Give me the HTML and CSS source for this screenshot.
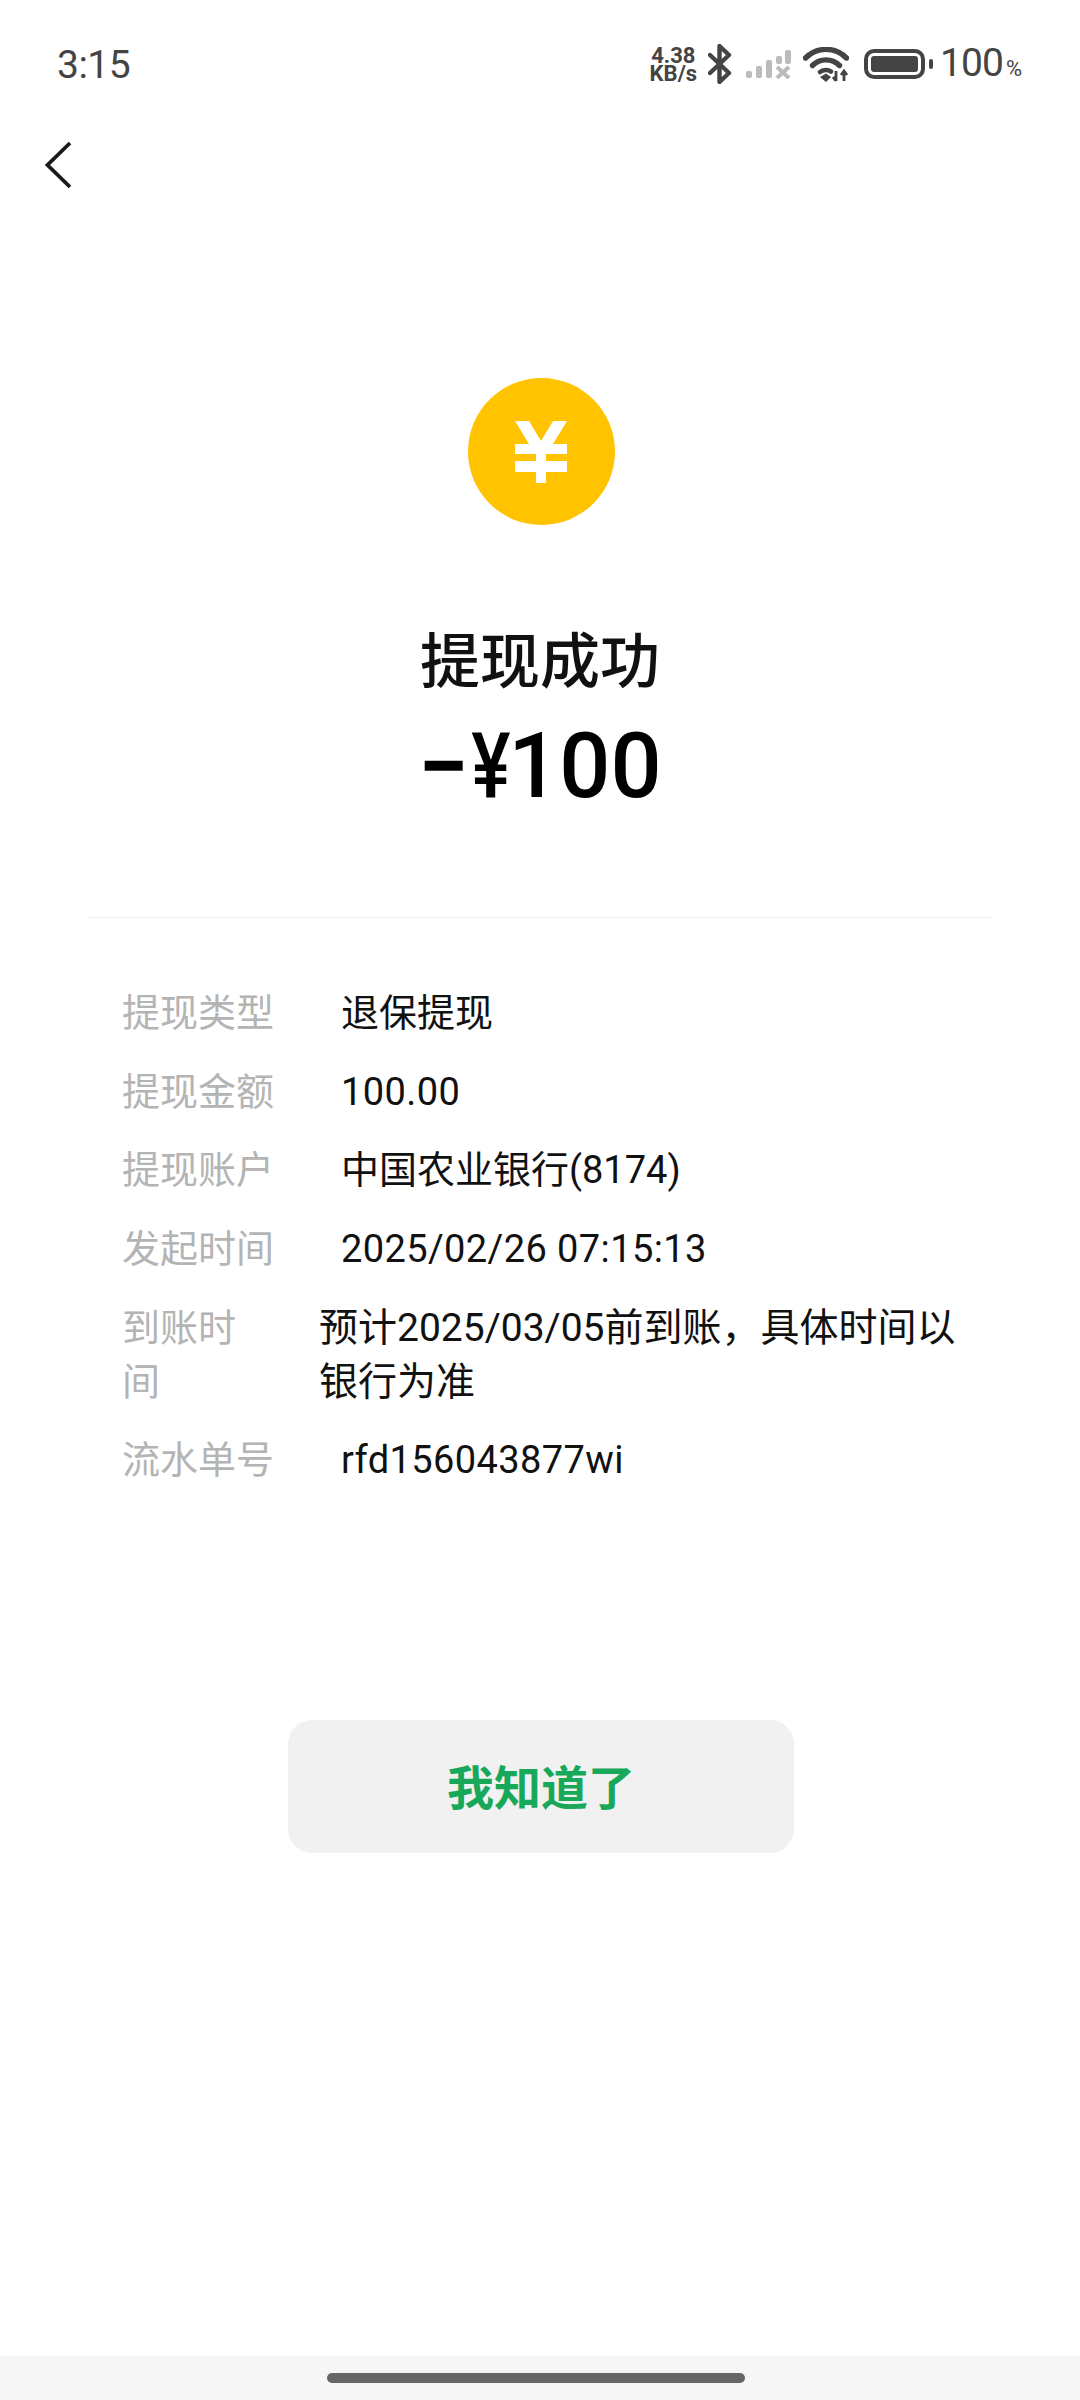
FILE: index.html
```html
<!DOCTYPE html>
<html lang="zh-CN">
<head>
    <meta charset="UTF-8">
    <meta name="viewport" content="width=device-width, initial-scale=1.0">
    <title>提现成功</title>
    <link rel="stylesheet" href="styles.css">
</head>
<body>
    <div class="statusbar">
        <span class="time">3:15</span>
        <div class="status-icons">
            <div class="speed"><span>4.38</span><span>KB/s</span></div>
            <svg class="icon-bt" width="24" height="40" viewBox="0 0 24 40"><path d="M2 11 L21 29 L11.5 38 V2 L21 11 L2 29" fill="none" stroke="#444" stroke-width="4.4" stroke-linejoin="round" stroke-linecap="round"/></svg>
            <svg class="icon-signal" width="46" height="30" viewBox="0 0 46 30">
                <rect x="0" y="22" width="6" height="7" rx="2" fill="#bbb"/>
                <rect x="10" y="17" width="6" height="12" rx="2" fill="#bbb"/>
                <rect x="20" y="11" width="6" height="18" rx="2" fill="#bbb"/>
                <rect x="30" y="7" width="6" height="8" rx="2" fill="#bbb"/>
                <rect x="39" y="1" width="6" height="14" rx="2" fill="#bbb"/>
                <path d="M31 18 L43 29 M43 18 L31 29" stroke="#bbb" stroke-width="4"/>
            </svg>
            <svg class="icon-wifi" width="46" height="35" viewBox="0 0 46 35">
                <path d="M2.5 11 C14 -0.5 32 -0.5 43.5 11" fill="none" stroke="#444" stroke-width="5.4" stroke-linecap="round"/>
                <path d="M9.5 18.5 C17 11 29 11 36.5 18.5" fill="none" stroke="#444" stroke-width="5.4" stroke-linecap="round"/>
                <path d="M17 25 C20 22.5 25 22.5 28 24.5" fill="none" stroke="#444" stroke-width="4.6" stroke-linecap="round"/>
                <path d="M17 30 L23 26.5 L28 30 L23 35 Z" fill="#444"/>
                <path d="M33 24 V34 M30 30 L33 34 M41 34 V24 M38 28 L41 24 L44 28" fill="none" stroke="#444" stroke-width="2.8"/>
            </svg>
            <svg class="icon-battery" width="70" height="30" viewBox="0 0 70 30">
                <rect x="2" y="2" width="57" height="26" rx="8" fill="none" stroke="#444" stroke-width="4"/>
                <rect x="7" y="7" width="47" height="16" rx="3" fill="#444"/>
                <rect x="65" y="10" width="4" height="10" rx="2" fill="#444"/>
            </svg>
            <span class="battery-num">100<small>%</small></span>
        </div>
    </div>

    <div class="nav">
        <svg width="28" height="48" viewBox="0 0 28 48"><path d="M26 2 L3.5 24 L26 46" fill="none" stroke="#1a1a1a" stroke-width="3.8"/></svg>
    </div>

    <div class="summary">
        <div class="coin">
            <svg width="52" height="62" viewBox="0 0 52 62"><path d="M0 0 H14 L26 20 L38 0 H52 L38 23 H52 V33 H31 V40 H52 V51 H31 V62 H21 V51 H0 V40 H21 V33 H0 V23 H14 Z" fill="#fff"/></svg>
        </div>
        <h1 class="title">提现成功</h1>
        <div class="amount"><span class="minus">−</span><span class="yen">¥</span>100</div>
    </div>

    <div class="divider"></div>

    <div class="details">
        <div class="row">
            <span class="label">提现类型</span>
            <span class="value">退保提现</span>
        </div>
        <div class="row">
            <span class="label">提现金额</span>
            <span class="value num">100.00</span>
        </div>
        <div class="row">
            <span class="label">提现账户</span>
            <span class="value">中国农业银行(8174)</span>
        </div>
        <div class="row">
            <span class="label">发起时间</span>
            <span class="value num">2025/02/26 07:15:13</span>
        </div>
        <div class="row row-wrap">
            <span class="label">到账时间</span>
            <span class="value">预计2025/03/05前到账，具体时间以银行为准</span>
        </div>
        <div class="row">
            <span class="label">流水单号</span>
            <span class="value num">rfd156043877wi</span>
        </div>
    </div>

    <button class="ok-btn">我知道了</button>

    <div class="homebar"><div class="handle"></div></div>
</body>
</html>
```

FILE: styles.css
```css
* {
    box-sizing: border-box;
}
body {
    margin: 0;
    width: 1080px;
    height: 2400px;
    display: flex;
    flex-direction: column;
    background: #fff;
    font-family: Roboto, "Noto Sans CJK SC", sans-serif;
    color: #111;
}
.statusbar {
    height: 84px;
    padding: 44px 58px 0 57px;
    display: flex;
    justify-content: space-between;
    align-items: center;
    color: #444;
}
.time {
    font-size: 39px;
    line-height: 40px;
    letter-spacing: -0.5px;
    padding-top: 2px;
}
.status-icons {
    display: flex;
    align-items: center;
}
.speed {
    display: flex;
    flex-direction: column;
    font-size: 22px;
    line-height: 18px;
    font-weight: 700;
    text-align: center;
    margin-right: 11px;
    padding-top: 2px;
}
.icon-bt {
    margin-right: 14px;
}
.icon-signal {
    margin-right: 11px;
}
.icon-wifi {
    margin-right: 15px;
}
.icon-battery {
    margin-right: 6px;
}
.battery-num {
    font-size: 39px;
    line-height: 40px;
    letter-spacing: -1px;
    padding-top: 4px;
}
.battery-num small {
    font-size: 22px;
    margin-left: 3px;
    letter-spacing: 0;
}
.nav {
    height: 105px;
    padding: 57px 0 0 44px;
}
.nav svg {
    display: block;
}
.summary {
    margin-top: 189px;
    display: flex;
    flex-direction: column;
    align-items: center;
}
.coin {
    width: 147px;
    height: 147px;
    margin-left: 2px;
    border-radius: 50%;
    background: #ffc300;
    display: flex;
    align-items: center;
    justify-content: center;
}
.coin svg {
    display: block;
}
.title {
    margin: 103px 0 0;
    font-size: 60px;
    line-height: 70px;
    font-weight: 500;
    color: #111;
}
.amount {
    margin-top: 19px;
    font-size: 90px;
    line-height: 100px;
    font-weight: 500;
    color: #000;
}
.minus {
    font-weight: 700;
}
.yen {
    display: inline-block;
    margin: 0 -7px 0 -1px;
    transform: scaleX(0.82);
}
.divider {
    margin: 100px 88px 0;
    height: 1px;
    background: #eee;
}
.details {
    padding: 68px 110px 0 122px;
    display: flex;
    flex-direction: column;
    gap: 24.7px;
}
.row {
    display: flex;
    font-size: 38px;
    line-height: 54px;
}
.label {
    width: 152px;
    flex-shrink: 0;
    color: #b4b4b4;
}
.value {
    margin-left: 67px;
    color: #111;
}
.num {
    letter-spacing: 0.4px;
}
.row-wrap .label {
    width: 130px;
}
.row-wrap .value {
    margin-left: 67px;
    font-size: 39px;
}
.ok-btn {
    align-self: center;
    margin: 233px 0 0 2px;
    width: 506px;
    height: 133px;
    padding-bottom: 5px;
    border: none;
    border-radius: 24px;
    background: #f1f1f1;
    color: #17a85a;
    font-family: inherit;
    font-size: 47px;
    font-weight: 700;
}
.homebar {
    margin-top: auto;
    height: 44px;
    background: #f6f6f6;
    padding-top: 17px;
}
.handle {
    width: 418px;
    height: 10px;
    margin-left: 327px;
    border-radius: 5px;
    background: #666;
}
```
